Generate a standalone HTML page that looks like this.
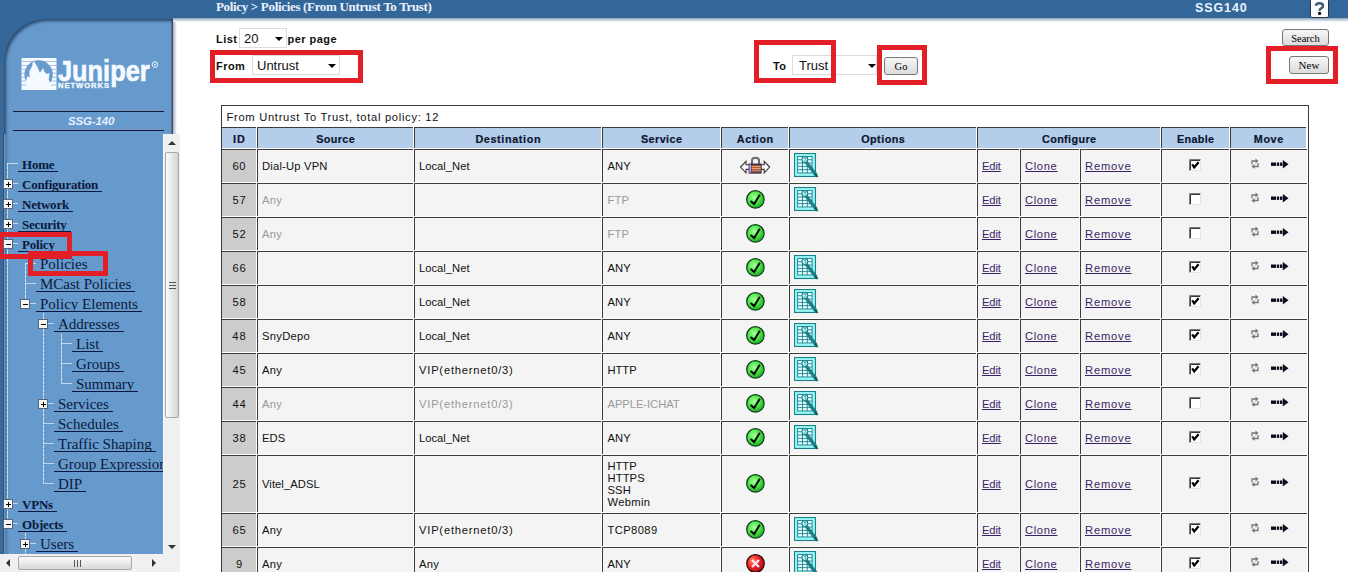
<!DOCTYPE html><html><head><meta charset="utf-8"><style>
*{box-sizing:border-box}
html,body{margin:0;padding:0;background:#fff;width:1348px;height:572px;overflow:hidden;position:relative}
body{font-family:"Liberation Sans",sans-serif;color:#000}
.a{position:absolute}
#topbar{left:0;top:0;width:1348px;height:18px;background:#336699}
#topshadow{left:172px;top:18px;width:1176px;height:4px;background:linear-gradient(#8da3ba,#fff)}
#leftdark{left:0;top:17px;width:173px;height:60px;background:#336699}
#leftstrip{left:0;top:62px;width:4px;height:492px;background:#3a6a9c}
#panel{left:4px;top:19px;width:169px;height:140px;background:#6699cc;border-top-left-radius:42px;box-shadow:inset 2px 2px 3px rgba(20,40,70,.7),inset -1px 0 0 rgba(60,75,95,.95),inset -2px 0 1px rgba(60,80,110,.5)}
#rshadow{left:173px;top:22px;width:4px;height:112px;background:linear-gradient(90deg,#a9b3bd,#fff)}
#vscroll{left:163px;top:134px;width:17px;height:420px;background:#f0f0f0;border-left:1px solid #fafafa}
#hscroll{left:0;top:554px;width:180px;height:18px;background:#f0f0f0}
.vthumb{position:absolute;left:1px;width:14px;border:1px solid #a8a8a8;border-radius:2px;background:linear-gradient(90deg,#fbfbfb,#e4e4e4 60%,#d4d4d4)}
.hthumb{position:absolute;height:14px;border:1px solid #a8a8a8;border-radius:2px;background:linear-gradient(#fbfbfb,#e6e6e6 60%,#d6d6d6)}
.grip{position:absolute;background:#555}
.title{left:216px;top:-1px;font-family:"Liberation Serif",serif;font-weight:bold;font-size:13px;color:#eaf2ff;white-space:nowrap;letter-spacing:-0.33px}
.ssg{left:1195px;top:1px;font-weight:bold;font-size:12.5px;color:#eaf2ff;letter-spacing:0.9px}
#help{left:1311px;top:0;width:18px;height:18px;background:#fff;border:1px solid #8a97a8;border-top:0;border-radius:0 0 2px 2px;font-weight:bold;font-size:15px;color:#1e2a48;text-align:center;line-height:17px;-webkit-text-stroke:0.5px #1e2a48}
.lbl{font-weight:bold;font-size:11px;color:#111;white-space:nowrap;letter-spacing:0.45px}
.sel{background:#fff;border:1px solid #dcdcdc;font-size:13px;color:#111;white-space:nowrap}
.arrow{position:absolute;width:0;height:0;border-left:4px solid transparent;border-right:4px solid transparent;border-top:4px solid #000}
.rb{position:absolute;border:5px solid #e41e26}
.btn{position:absolute;border:1px solid #777;border-radius:3px;background:linear-gradient(#f6f6f6,#dcdcdc);font-family:"Liberation Serif",serif;font-size:10.5px;color:#000;text-align:center}
/* nav */
#nav{left:0;top:134px;width:163px;height:420px;overflow:hidden;background:#6699cc}
#navdark{left:0;top:0;width:4px;height:420px;background:#3a6a9c;border-right:1px solid #2c4f75}
#navshade{left:5px;top:0;width:4px;height:420px;background:linear-gradient(90deg,#52779e,#6699cc)}
.ni{position:absolute;white-space:nowrap;font-family:"Liberation Serif",serif;color:#0b1a3c}
.ni.b{font-weight:bold;font-size:13px;letter-spacing:-0.2px}
.ni.r{font-size:15px}
.ul{position:absolute;height:1px;background:#0b1a3c}
.tb{position:absolute;width:10px;height:10px;background:#f8f8f8;border:1px solid #56677d}
.tb i{position:absolute;left:2px;top:3.5px;width:5px;height:1.8px;background:#000}
.tb i.v{left:3.6px;top:1.9px;width:1.8px;height:5px}
.vl{position:absolute;width:1px;background:repeating-linear-gradient(#d4e2f1 0 3px,#8fb3da 3px 4px)}
.hl{position:absolute;height:1px;background:#c4d6ea}
/* table */
.c{position:absolute;border-left:1px solid #3c3c3c;border-top:1px solid #3c3c3c;background:#f4f4f4;overflow:hidden;white-space:nowrap;font-size:11.2px;color:#111}
.c.h{background:#b3cdea;font-weight:bold;font-size:11px;color:#0b1630;text-align:center;-webkit-text-stroke:0.2px #0b1630}
.c.id{background:#cccccc;text-align:center}
.t{position:absolute;left:4px}
.g{color:#9a9a9a}
.lk{color:#3a1f66;text-decoration:underline}
</style></head><body>
<div id="topbar" class="a"></div><div id="topshadow" class="a"></div><div id="leftdark" class="a"></div><div id="panel" class="a"></div><div id="leftstrip" class="a"></div><div id="rshadow" class="a"></div>
<svg class="a" style="left:21px;top:58px" width="36" height="32" viewBox="0 0 36 32"><rect x="0.5" y="0" width="35" height="32" fill="#f4faff"/><g stroke="#9fbddc" stroke-width="0.9"><path d="M0.5 3.5H35.5M0.5 7.5H35.5M0.5 11.3H35.5M0.5 15.2H35.5M0.5 19.2H35.5M0.5 23H35.5M0.5 27H35.5"/></g><circle cx="17.6" cy="16.5" r="14.2" fill="#6b9bcc"/><path d="M5.2 22 L6.5 18 L8.8 19.5 L8.2 13.5 L11.2 8 L11.6 4.6 L13.2 3.4 L16.5 9 L18.8 14.8 L22.5 9.8 L22.8 13 L25.6 16 L28.6 15 L27.6 22 L30.6 26.5 L26 30.6 L17.6 32 L9.2 30.6 L4.6 26.5 Z" fill="#f4faff"/></svg>
<div class="a" style="left:57.5px;top:53.5px;font-weight:bold;font-size:29px;color:#f4faff;line-height:34px;-webkit-text-stroke:0.7px #f4faff;transform:scaleX(0.875);transform-origin:0 0;white-space:nowrap">Juniper</div>
<div class="a" style="left:58px;top:82px;font-weight:bold;font-size:7.6px;color:#f4faff;line-height:8px;letter-spacing:0.95px;-webkit-text-stroke:0.3px #f4faff;white-space:nowrap;background:#6699cc;padding-right:1px">NETWORKS</div>
<svg class="a" style="left:151px;top:61px" width="8" height="8" viewBox="0 0 8 8"><circle cx="4" cy="3.5" r="2.8" fill="none" stroke="#eef6ff" stroke-width="1"/><circle cx="4" cy="3.5" r="0.9" fill="#eef6ff"/></svg>
<div class="a" style="left:13px;top:111px;width:151px;height:1px;background:#0b1a40;box-shadow:0 -1px 1px rgba(150,150,170,.6)"></div>
<div class="a" style="left:13px;top:130px;width:151px;height:1px;background:#0b1a40;box-shadow:0 -1px 1px rgba(150,150,170,.6)"></div>
<div class="a" style="left:68px;top:114px;font-weight:bold;font-style:italic;font-size:11.5px;color:#e4f0ff;line-height:14px;letter-spacing:-0.15px;white-space:nowrap">SSG-140</div>
<div class="a title">Policy &gt; Policies (From Untrust To Trust)</div>
<div class="a ssg">SSG140</div><svg class="a" style="left:1310px;top:0" width="19" height="18" viewBox="0 0 19 18"><rect x="0.5" y="-1" width="18" height="18.5" rx="1.5" fill="#fbfdff" stroke="#26344a" stroke-width="1"/><path d="M6 5.8 Q6 3.2 9.5 3.2 Q13 3.2 13 5.9 Q13 7.6 10.8 8.6 Q9.6 9.2 9.6 10.8" fill="none" stroke="#3b5a6a" stroke-width="2.5"/><circle cx="9.6" cy="13.4" r="1.6" fill="#000"/></svg>
<div class="a lbl" style="left:216px;top:33px">List</div>
<div class="a sel" style="left:239px;top:28px;width:48px;height:20px"><span class="a" style="left:4px;top:2px">20</span><span class="arrow" style="left:35px;top:8px"></span></div>
<div class="a lbl" style="left:287.5px;top:33px">per page</div>
<div class="a lbl" style="left:216px;top:60px">From</div>
<div class="a sel" style="left:252px;top:55px;width:88px;height:20px"><span class="a" style="left:4px;top:2px">Untrust</span><span class="arrow" style="left:75px;top:8px"></span></div>
<div class="rb" style="left:210px;top:50px;width:153px;height:33px"></div>
<div class="a lbl" style="left:773px;top:60px">To</div>
<div class="a sel" style="left:792px;top:55px;width:85px;height:20px"><span class="a" style="left:6px;top:2px">Trust</span><span class="arrow" style="left:75px;top:8px"></span></div>
<div class="rb" style="left:754px;top:40px;width:82px;height:43px"></div>
<div class="btn" style="left:884px;top:57px;width:34px;height:18px;line-height:18px">Go</div>
<div class="rb" style="left:877px;top:45px;width:50px;height:40px"></div>
<div class="btn" style="left:1282px;top:29px;width:47px;height:17px;line-height:17px">Search</div>
<div class="btn" style="left:1289px;top:56px;width:40px;height:18px;line-height:17px;font-size:11px">New</div>
<div class="rb" style="left:1266px;top:46px;width:72px;height:38px"></div>

<div id="nav" class="a"><div id="navdark" class="a"></div><div id="navshade" class="a"></div>
<div class="ni b" style="left:18px;top:24px;line-height:13px;padding:0 4px;border-bottom:1px solid #0b1a3c">Home</div>
<div class="hl" style="left:7px;top:29px;width:11px"></div>
<div class="ni b" style="left:18px;top:44px;line-height:13px;padding:0 4px;border-bottom:1px solid #0b1a3c">Configuration</div>
<div class="hl" style="left:7px;top:49px;width:11px"></div>
<div class="ni b" style="left:18px;top:64px;line-height:13px;padding:0 4px;border-bottom:1px solid #0b1a3c">Network</div>
<div class="hl" style="left:7px;top:69px;width:11px"></div>
<div class="ni b" style="left:18px;top:84px;line-height:13px;padding:0 4px;border-bottom:1px solid #0b1a3c">Security</div>
<div class="hl" style="left:7px;top:89px;width:11px"></div>
<div class="ni b" style="left:18px;top:104px;line-height:13px;padding:0 4px;border-bottom:1px solid #0b1a3c">Policy</div>
<div class="hl" style="left:7px;top:109px;width:11px"></div>
<div class="ni r" style="left:36px;top:123px;line-height:14px;padding:0 4px;border-bottom:1px solid #0b1a3c">Policies</div>
<div class="hl" style="left:25px;top:129px;width:11px"></div>
<div class="ni r" style="left:36px;top:143px;line-height:14px;padding:0 4px;border-bottom:1px solid #0b1a3c">MCast Policies</div>
<div class="hl" style="left:25px;top:149px;width:11px"></div>
<div class="ni r" style="left:36px;top:163px;line-height:14px;padding:0 4px;border-bottom:1px solid #0b1a3c">Policy Elements</div>
<div class="hl" style="left:25px;top:169px;width:11px"></div>
<div class="ni r" style="left:54px;top:183px;line-height:14px;padding:0 4px;border-bottom:1px solid #0b1a3c">Addresses</div>
<div class="hl" style="left:43px;top:189px;width:11px"></div>
<div class="ni r" style="left:72px;top:203px;line-height:14px;padding:0 4px;border-bottom:1px solid #0b1a3c">List</div>
<div class="hl" style="left:61px;top:209px;width:11px"></div>
<div class="ni r" style="left:72px;top:223px;line-height:14px;padding:0 4px;border-bottom:1px solid #0b1a3c">Groups</div>
<div class="hl" style="left:61px;top:229px;width:11px"></div>
<div class="ni r" style="left:72px;top:243px;line-height:14px;padding:0 4px;border-bottom:1px solid #0b1a3c">Summary</div>
<div class="hl" style="left:61px;top:249px;width:11px"></div>
<div class="ni r" style="left:54px;top:263px;line-height:14px;padding:0 4px;border-bottom:1px solid #0b1a3c">Services</div>
<div class="hl" style="left:43px;top:269px;width:11px"></div>
<div class="ni r" style="left:54px;top:283px;line-height:14px;padding:0 4px;border-bottom:1px solid #0b1a3c">Schedules</div>
<div class="hl" style="left:43px;top:289px;width:11px"></div>
<div class="ni r" style="left:54px;top:303px;line-height:14px;padding:0 4px;border-bottom:1px solid #0b1a3c">Traffic Shaping</div>
<div class="hl" style="left:43px;top:309px;width:11px"></div>
<div class="ni r" style="left:54px;top:323px;line-height:14px;padding:0 4px;border-bottom:1px solid #0b1a3c">Group Expression</div>
<div class="hl" style="left:43px;top:329px;width:11px"></div>
<div class="ni r" style="left:54px;top:343px;line-height:14px;padding:0 4px;border-bottom:1px solid #0b1a3c">DIP</div>
<div class="hl" style="left:43px;top:349px;width:11px"></div>
<div class="ni b" style="left:18px;top:364px;line-height:13px;padding:0 4px;border-bottom:1px solid #0b1a3c">VPNs</div>
<div class="hl" style="left:7px;top:369px;width:11px"></div>
<div class="ni b" style="left:18px;top:384px;line-height:13px;padding:0 4px;border-bottom:1px solid #0b1a3c">Objects</div>
<div class="hl" style="left:7px;top:389px;width:11px"></div>
<div class="ni r" style="left:36px;top:403px;line-height:14px;padding:0 4px;border-bottom:1px solid #0b1a3c">Users</div>
<div class="hl" style="left:25px;top:409px;width:11px"></div>
<div class="vl" style="left:7px;top:29px;height:360px"></div>
<div class="vl" style="left:25px;top:129px;height:40px"></div>
<div class="vl" style="left:43px;top:179px;height:170px"></div>
<div class="vl" style="left:61px;top:200px;height:49px"></div>
<div class="vl" style="left:25px;top:399px;height:30px"></div>
<div class="tb" style="left:3px;top:45px"><i></i><i class="v"></i></div><div class="tb" style="left:3px;top:65px"><i></i><i class="v"></i></div><div class="tb" style="left:3px;top:85px"><i></i><i class="v"></i></div><div class="tb" style="left:3px;top:105px"><i></i></div><div class="tb" style="left:20px;top:165px"><i></i></div><div class="tb" style="left:38px;top:185px"><i></i></div><div class="tb" style="left:38px;top:265px"><i></i><i class="v"></i></div><div class="tb" style="left:3px;top:365px"><i></i><i class="v"></i></div><div class="tb" style="left:3px;top:385px"><i></i></div><div class="tb" style="left:20px;top:405px"><i></i><i class="v"></i></div>
</div>
<div id="vscroll" class="a"><div class="arrow" style="left:4px;top:7px;border-top:0;border-bottom:4px solid #333"></div><div class="vthumb" style="top:18px;height:266px"><div class="grip" style="left:3px;top:129px;width:7px;height:1px"></div><div class="grip" style="left:3px;top:132px;width:7px;height:1px"></div><div class="grip" style="left:3px;top:135px;width:7px;height:1px"></div></div><div class="arrow" style="left:4px;top:411px;border-top:4px solid #333"></div></div>
<div id="hscroll" class="a"><div class="arrow" style="left:6px;top:5px;border-left:0;border-right:4px solid #333;border-top:4px solid transparent;border-bottom:4px solid transparent"></div><div class="hthumb" style="left:18px;top:2px;width:114px"><div class="grip" style="left:55px;top:3px;width:1px;height:7px"></div><div class="grip" style="left:58px;top:3px;width:1px;height:7px"></div><div class="grip" style="left:61px;top:3px;width:1px;height:7px"></div></div><div class="arrow" style="left:152px;top:5px;border-right:0;border-left:4px solid #333;border-top:4px solid transparent;border-bottom:4px solid transparent"></div></div>
<div class="rb" style="left:-2px;top:232px;width:74px;height:27px"></div>
<div class="rb" style="left:28px;top:251px;width:80px;height:25px"></div>
<div class="a" style="left:221px;top:105px;width:1088px;height:480px;border-top:1px solid #3c3c3c;border-left:1px solid #3c3c3c;border-right:1px solid #3c3c3c"></div>
<div class="a" style="left:226.5px;top:109.62px;font-size:11.2px;color:#111;white-space:nowrap;letter-spacing:0.69px;line-height:14px">From Untrust To Trust, total policy: 12</div>
<div class="c h" style="left:221px;top:127px;width:35px;height:21px;"><div class="a" style="left:0;width:34px;top:3.86px;line-height:14px;letter-spacing:1.00px;text-indent:1.00px;font-size:10.8px">ID</div></div>
<div class="c h" style="left:257px;top:127px;width:156px;height:21px;"><div class="a" style="left:0;width:155px;top:3.86px;line-height:14px;letter-spacing:0.38px;text-indent:0.38px;font-size:10.8px">Source</div></div>
<div class="c h" style="left:414px;top:127px;width:187px;height:21px;"><div class="a" style="left:0;width:186px;top:3.86px;line-height:14px;letter-spacing:0.64px;text-indent:0.64px;font-size:10.8px">Destination</div></div>
<div class="c h" style="left:602px;top:127px;width:118px;height:21px;"><div class="a" style="left:0;width:117px;top:3.86px;line-height:14px;letter-spacing:0.43px;text-indent:0.43px;font-size:10.8px">Service</div></div>
<div class="c h" style="left:721px;top:127px;width:67px;height:21px;"><div class="a" style="left:0;width:66px;top:3.86px;line-height:14px;letter-spacing:0.56px;text-indent:0.56px;font-size:10.8px">Action</div></div>
<div class="c h" style="left:789px;top:127px;width:187px;height:21px;"><div class="a" style="left:0;width:186px;top:3.86px;line-height:14px;letter-spacing:0.49px;text-indent:0.49px;font-size:10.8px">Options</div></div>
<div class="c h" style="left:977px;top:127px;width:183px;height:21px;"><div class="a" style="left:0;width:182px;top:3.86px;line-height:14px;letter-spacing:0.37px;text-indent:0.37px;font-size:10.8px">Configure</div></div>
<div class="c h" style="left:1161px;top:127px;width:68px;height:21px;"><div class="a" style="left:0;width:67px;top:3.86px;line-height:14px;letter-spacing:0.36px;text-indent:0.36px;font-size:10.8px">Enable</div></div>
<div class="c h" style="left:1230px;top:127px;width:76px;height:21px;"><div class="a" style="left:0;width:75px;top:3.86px;line-height:14px;letter-spacing:0.57px;text-indent:0.57px;font-size:10.8px">Move</div></div>
<div class="c id" style="left:221px;top:149px;width:35px;height:33px;"><div class="a" style="left:0;width:34px;text-align:center;top:9.12px;line-height:14px;letter-spacing:0.68px;text-indent:0.68px">60</div></div>
<div class="c " style="left:257px;top:149px;width:156px;height:33px;"><div class="a" style="left:4px;top:9.12px;line-height:14px;letter-spacing:0.20px">Dial-Up VPN</div></div>
<div class="c " style="left:414px;top:149px;width:187px;height:33px;"><div class="a" style="left:4px;top:9.12px;line-height:14px;letter-spacing:0.02px">Local_Net</div></div>
<div class="c " style="left:602px;top:149px;width:118px;height:33px;"><div class="a" style="left:4.5px;top:9.12px;line-height:14px;letter-spacing:0.11px">ANY</div></div>
<div class="c " style="left:721px;top:149px;width:67px;height:33px;"><div class="a" style="left:18px;top:6px;line-height:0"><svg width="31" height="19" viewBox="0 0 31 19"><path d="M0.6 11 L6 5.3 L6 8.8 L9.5 8.8 L9.5 13.4 L6 13.4 L6 16.9 Z" fill="#fdfdfd" stroke="#3a3a3a" stroke-width="1.1"/><path d="M29.6 11 L24.2 5.3 L24.2 8.8 L20.7 8.8 L20.7 13.4 L24.2 13.4 L24.2 16.9 Z" fill="#fdfdfd" stroke="#3a3a3a" stroke-width="1.1"/><path d="M12 8 V4.6 Q12 1.8 15.5 1.8 Q19 1.8 19 4.6 V8" fill="none" stroke="#6d6878" stroke-width="2.1"/><rect x="8.6" y="7.6" width="13" height="10" fill="#2c2050"/><rect x="9.4" y="8.4" width="1.6" height="8.4" fill="#c0a8f0"/><g stroke-width="1.05"><path d="M11.5 9.3 H20.8 M11.5 11.5 H20.8 M11.5 13.7 H20.8 M11.5 15.9 H20.8" stroke="#b35a2a"/><path d="M11.5 10.4 H20.8 M11.5 12.6 H20.8 M11.5 14.8 H20.8" stroke="#f0a070"/></g></svg></div></div>
<div class="c " style="left:789px;top:149px;width:187px;height:33px;"><div class="a" style="left:4px;top:3.3px;line-height:0"><svg width="25" height="25" viewBox="0 0 25 25"><rect x="0.5" y="0.5" width="21" height="23" fill="#96f4f4" stroke="#1b8088" stroke-width="1.1"/><rect x="3.2" y="3" width="15.3" height="17.4" fill="#1b8088"/><g fill="#e6ffff"><rect x="4.1" y="3.9" width="3.9" height="2.4"/><rect x="4.1" y="7.2" width="3.9" height="2.4"/><rect x="4.1" y="10.5" width="3.9" height="2.4"/><rect x="4.1" y="13.8" width="3.9" height="2.4"/><rect x="4.1" y="17.1" width="3.9" height="2.4"/><rect x="8.9" y="3.9" width="3.9" height="2.4"/><rect x="8.9" y="7.2" width="3.9" height="2.4"/><rect x="8.9" y="10.5" width="3.9" height="2.4"/><rect x="8.9" y="13.8" width="3.9" height="2.4"/><rect x="8.9" y="17.1" width="3.9" height="2.4"/><rect x="13.7" y="3.9" width="3.9" height="2.4"/><rect x="13.7" y="7.2" width="3.9" height="2.4"/><rect x="13.7" y="10.5" width="3.9" height="2.4"/><rect x="13.7" y="13.8" width="3.9" height="2.4"/><rect x="13.7" y="17.1" width="3.9" height="2.4"/></g><circle cx="10.8" cy="6.6" r="2.9" fill="#c8ffff" stroke="#1b8088" stroke-width="1.1"/><path d="M10 5.6 Q11.8 4.6 11.6 6.3 Q10 7 11.5 8" fill="none" stroke="#1b8088" stroke-width="0.8"/><path d="M12.3 9.2 L22.3 22.3" stroke="#1b8088" stroke-width="3.4"/><path d="M21 20.6 L23.6 24" stroke="#0f5c62" stroke-width="2"/></svg></div></div>
<div class="c " style="left:977px;top:149px;width:42px;height:33px;"><div class="a lk" style="left:4px;top:9.12px;line-height:14px;letter-spacing:-0.12px">Edit</div></div>
<div class="c " style="left:1020px;top:149px;width:59px;height:33px;"><div class="a lk" style="left:4px;top:9.12px;line-height:14px;letter-spacing:0.65px">Clone</div></div>
<div class="c " style="left:1080px;top:149px;width:80px;height:33px;"><div class="a lk" style="left:4px;top:9.12px;line-height:14px;letter-spacing:0.81px">Remove</div></div>
<div class="c " style="left:1161px;top:149px;width:68px;height:33px;"><div class="a" style="left:27px;top:9px;line-height:0"><svg width="12" height="12" viewBox="0 0 12 12"><rect x="0" y="0" width="12" height="12" fill="#fff"/><path d="M0.5 12 V0.5 H12" fill="none" stroke="#7a7a7a" stroke-width="1"/><path d="M1.5 11 V1.5 H11" fill="none" stroke="#383838" stroke-width="1"/><path d="M0.5 11.5 H11.5 V0.5" fill="none" stroke="#e4e4e4" stroke-width="1"/><path d="M3.2 5.4 L5.2 8.4 L9.6 3.2" fill="none" stroke="#000" stroke-width="2.2"/></svg></div></div>
<div class="c " style="left:1230px;top:149px;width:77px;height:33px;"><div class="a" style="left:19.5px;top:8px;line-height:0"><svg width="8" height="12" viewBox="0 0 8 12"><path d="M1 6.5 V3 H5" fill="none" stroke="#777" stroke-width="1.3"/><path d="M4.5 0.5 L7.5 3 L4.5 5.5 Z" fill="#777"/><path d="M7 5 V8.5 H3" fill="none" stroke="#777" stroke-width="1.3"/><path d="M3.5 6 L0.5 8.5 L3.5 11 Z" fill="#777"/></svg></div><div class="a" style="left:39.6px;top:10px;line-height:0"><svg width="18" height="9" viewBox="0 0 18 9"><g fill="#0a0f1e"><rect x="0" y="2.5" width="5" height="3.4"/><rect x="5.8" y="2.5" width="2.4" height="3.4"/><rect x="9" y="2.5" width="2.4" height="3.4"/><path d="M11.8 0 L17.5 4.2 L11.8 8.4 Z"/></g></svg></div></div>
<div class="c id" style="left:221px;top:183px;width:35px;height:33px;"><div class="a" style="left:0;width:34px;text-align:center;top:9.12px;line-height:14px;letter-spacing:0.78px;text-indent:0.78px">57</div></div>
<div class="c " style="left:257px;top:183px;width:156px;height:33px;"><div class="a g" style="left:4px;top:9.12px;line-height:14px;letter-spacing:0.34px">Any</div></div>
<div class="c " style="left:414px;top:183px;width:187px;height:33px;"></div>
<div class="c " style="left:602px;top:183px;width:118px;height:33px;"><div class="a g" style="left:4.5px;top:9.12px;line-height:14px;letter-spacing:0.11px">FTP</div></div>
<div class="c " style="left:721px;top:183px;width:67px;height:33px;"><div class="a" style="left:24px;top:6px;line-height:0"><svg width="19" height="19" viewBox="0 0 19 19"><defs><radialGradient id="gg" cx="42%" cy="38%" r="62%"><stop offset="0" stop-color="#a6ff9a"/><stop offset=".55" stop-color="#4ee44a"/><stop offset="1" stop-color="#1fae26"/></radialGradient></defs><circle cx="9.4" cy="9.4" r="8.7" fill="url(#gg)" stroke="#063a10" stroke-width="1.2"/><path d="M4.6 11 L8.2 14 L13.8 4.8" fill="none" stroke="#000" stroke-width="1.9"/></svg></div></div>
<div class="c " style="left:789px;top:183px;width:187px;height:33px;"><div class="a" style="left:4px;top:3.3px;line-height:0"><svg width="25" height="25" viewBox="0 0 25 25"><rect x="0.5" y="0.5" width="21" height="23" fill="#96f4f4" stroke="#1b8088" stroke-width="1.1"/><rect x="3.2" y="3" width="15.3" height="17.4" fill="#1b8088"/><g fill="#e6ffff"><rect x="4.1" y="3.9" width="3.9" height="2.4"/><rect x="4.1" y="7.2" width="3.9" height="2.4"/><rect x="4.1" y="10.5" width="3.9" height="2.4"/><rect x="4.1" y="13.8" width="3.9" height="2.4"/><rect x="4.1" y="17.1" width="3.9" height="2.4"/><rect x="8.9" y="3.9" width="3.9" height="2.4"/><rect x="8.9" y="7.2" width="3.9" height="2.4"/><rect x="8.9" y="10.5" width="3.9" height="2.4"/><rect x="8.9" y="13.8" width="3.9" height="2.4"/><rect x="8.9" y="17.1" width="3.9" height="2.4"/><rect x="13.7" y="3.9" width="3.9" height="2.4"/><rect x="13.7" y="7.2" width="3.9" height="2.4"/><rect x="13.7" y="10.5" width="3.9" height="2.4"/><rect x="13.7" y="13.8" width="3.9" height="2.4"/><rect x="13.7" y="17.1" width="3.9" height="2.4"/></g><circle cx="10.8" cy="6.6" r="2.9" fill="#c8ffff" stroke="#1b8088" stroke-width="1.1"/><path d="M10 5.6 Q11.8 4.6 11.6 6.3 Q10 7 11.5 8" fill="none" stroke="#1b8088" stroke-width="0.8"/><path d="M12.3 9.2 L22.3 22.3" stroke="#1b8088" stroke-width="3.4"/><path d="M21 20.6 L23.6 24" stroke="#0f5c62" stroke-width="2"/></svg></div></div>
<div class="c " style="left:977px;top:183px;width:42px;height:33px;"><div class="a lk" style="left:4px;top:9.12px;line-height:14px;letter-spacing:-0.12px">Edit</div></div>
<div class="c " style="left:1020px;top:183px;width:59px;height:33px;"><div class="a lk" style="left:4px;top:9.12px;line-height:14px;letter-spacing:0.65px">Clone</div></div>
<div class="c " style="left:1080px;top:183px;width:80px;height:33px;"><div class="a lk" style="left:4px;top:9.12px;line-height:14px;letter-spacing:0.81px">Remove</div></div>
<div class="c " style="left:1161px;top:183px;width:68px;height:33px;"><div class="a" style="left:27px;top:9px;line-height:0"><svg width="12" height="12" viewBox="0 0 12 12"><rect x="0" y="0" width="12" height="12" fill="#fff"/><path d="M0.5 12 V0.5 H12" fill="none" stroke="#7a7a7a" stroke-width="1"/><path d="M1.5 11 V1.5 H11" fill="none" stroke="#383838" stroke-width="1"/><path d="M0.5 11.5 H11.5 V0.5" fill="none" stroke="#e4e4e4" stroke-width="1"/></svg></div></div>
<div class="c " style="left:1230px;top:183px;width:77px;height:33px;"><div class="a" style="left:19.5px;top:8px;line-height:0"><svg width="8" height="12" viewBox="0 0 8 12"><path d="M1 6.5 V3 H5" fill="none" stroke="#777" stroke-width="1.3"/><path d="M4.5 0.5 L7.5 3 L4.5 5.5 Z" fill="#777"/><path d="M7 5 V8.5 H3" fill="none" stroke="#777" stroke-width="1.3"/><path d="M3.5 6 L0.5 8.5 L3.5 11 Z" fill="#777"/></svg></div><div class="a" style="left:39.6px;top:10px;line-height:0"><svg width="18" height="9" viewBox="0 0 18 9"><g fill="#0a0f1e"><rect x="0" y="2.5" width="5" height="3.4"/><rect x="5.8" y="2.5" width="2.4" height="3.4"/><rect x="9" y="2.5" width="2.4" height="3.4"/><path d="M11.8 0 L17.5 4.2 L11.8 8.4 Z"/></g></svg></div></div>
<div class="c id" style="left:221px;top:217px;width:35px;height:33px;"><div class="a" style="left:0;width:34px;text-align:center;top:9.12px;line-height:14px;letter-spacing:0.78px;text-indent:0.78px">52</div></div>
<div class="c " style="left:257px;top:217px;width:156px;height:33px;"><div class="a g" style="left:4px;top:9.12px;line-height:14px;letter-spacing:0.34px">Any</div></div>
<div class="c " style="left:414px;top:217px;width:187px;height:33px;"></div>
<div class="c " style="left:602px;top:217px;width:118px;height:33px;"><div class="a g" style="left:4.5px;top:9.12px;line-height:14px;letter-spacing:0.11px">FTP</div></div>
<div class="c " style="left:721px;top:217px;width:67px;height:33px;"><div class="a" style="left:24px;top:6px;line-height:0"><svg width="19" height="19" viewBox="0 0 19 19"><defs><radialGradient id="gg" cx="42%" cy="38%" r="62%"><stop offset="0" stop-color="#a6ff9a"/><stop offset=".55" stop-color="#4ee44a"/><stop offset="1" stop-color="#1fae26"/></radialGradient></defs><circle cx="9.4" cy="9.4" r="8.7" fill="url(#gg)" stroke="#063a10" stroke-width="1.2"/><path d="M4.6 11 L8.2 14 L13.8 4.8" fill="none" stroke="#000" stroke-width="1.9"/></svg></div></div>
<div class="c " style="left:789px;top:217px;width:187px;height:33px;"></div>
<div class="c " style="left:977px;top:217px;width:42px;height:33px;"><div class="a lk" style="left:4px;top:9.12px;line-height:14px;letter-spacing:-0.12px">Edit</div></div>
<div class="c " style="left:1020px;top:217px;width:59px;height:33px;"><div class="a lk" style="left:4px;top:9.12px;line-height:14px;letter-spacing:0.65px">Clone</div></div>
<div class="c " style="left:1080px;top:217px;width:80px;height:33px;"><div class="a lk" style="left:4px;top:9.12px;line-height:14px;letter-spacing:0.81px">Remove</div></div>
<div class="c " style="left:1161px;top:217px;width:68px;height:33px;"><div class="a" style="left:27px;top:9px;line-height:0"><svg width="12" height="12" viewBox="0 0 12 12"><rect x="0" y="0" width="12" height="12" fill="#fff"/><path d="M0.5 12 V0.5 H12" fill="none" stroke="#7a7a7a" stroke-width="1"/><path d="M1.5 11 V1.5 H11" fill="none" stroke="#383838" stroke-width="1"/><path d="M0.5 11.5 H11.5 V0.5" fill="none" stroke="#e4e4e4" stroke-width="1"/></svg></div></div>
<div class="c " style="left:1230px;top:217px;width:77px;height:33px;"><div class="a" style="left:19.5px;top:8px;line-height:0"><svg width="8" height="12" viewBox="0 0 8 12"><path d="M1 6.5 V3 H5" fill="none" stroke="#777" stroke-width="1.3"/><path d="M4.5 0.5 L7.5 3 L4.5 5.5 Z" fill="#777"/><path d="M7 5 V8.5 H3" fill="none" stroke="#777" stroke-width="1.3"/><path d="M3.5 6 L0.5 8.5 L3.5 11 Z" fill="#777"/></svg></div><div class="a" style="left:39.6px;top:10px;line-height:0"><svg width="18" height="9" viewBox="0 0 18 9"><g fill="#0a0f1e"><rect x="0" y="2.5" width="5" height="3.4"/><rect x="5.8" y="2.5" width="2.4" height="3.4"/><rect x="9" y="2.5" width="2.4" height="3.4"/><path d="M11.8 0 L17.5 4.2 L11.8 8.4 Z"/></g></svg></div></div>
<div class="c id" style="left:221px;top:251px;width:35px;height:33px;"><div class="a" style="left:0;width:34px;text-align:center;top:9.12px;line-height:14px;letter-spacing:0.78px;text-indent:0.78px">66</div></div>
<div class="c " style="left:257px;top:251px;width:156px;height:33px;"></div>
<div class="c " style="left:414px;top:251px;width:187px;height:33px;"><div class="a" style="left:4px;top:9.12px;line-height:14px;letter-spacing:0.02px">Local_Net</div></div>
<div class="c " style="left:602px;top:251px;width:118px;height:33px;"><div class="a" style="left:4.5px;top:9.12px;line-height:14px;letter-spacing:0.11px">ANY</div></div>
<div class="c " style="left:721px;top:251px;width:67px;height:33px;"><div class="a" style="left:24px;top:6px;line-height:0"><svg width="19" height="19" viewBox="0 0 19 19"><defs><radialGradient id="gg" cx="42%" cy="38%" r="62%"><stop offset="0" stop-color="#a6ff9a"/><stop offset=".55" stop-color="#4ee44a"/><stop offset="1" stop-color="#1fae26"/></radialGradient></defs><circle cx="9.4" cy="9.4" r="8.7" fill="url(#gg)" stroke="#063a10" stroke-width="1.2"/><path d="M4.6 11 L8.2 14 L13.8 4.8" fill="none" stroke="#000" stroke-width="1.9"/></svg></div></div>
<div class="c " style="left:789px;top:251px;width:187px;height:33px;"><div class="a" style="left:4px;top:3.3px;line-height:0"><svg width="25" height="25" viewBox="0 0 25 25"><rect x="0.5" y="0.5" width="21" height="23" fill="#96f4f4" stroke="#1b8088" stroke-width="1.1"/><rect x="3.2" y="3" width="15.3" height="17.4" fill="#1b8088"/><g fill="#e6ffff"><rect x="4.1" y="3.9" width="3.9" height="2.4"/><rect x="4.1" y="7.2" width="3.9" height="2.4"/><rect x="4.1" y="10.5" width="3.9" height="2.4"/><rect x="4.1" y="13.8" width="3.9" height="2.4"/><rect x="4.1" y="17.1" width="3.9" height="2.4"/><rect x="8.9" y="3.9" width="3.9" height="2.4"/><rect x="8.9" y="7.2" width="3.9" height="2.4"/><rect x="8.9" y="10.5" width="3.9" height="2.4"/><rect x="8.9" y="13.8" width="3.9" height="2.4"/><rect x="8.9" y="17.1" width="3.9" height="2.4"/><rect x="13.7" y="3.9" width="3.9" height="2.4"/><rect x="13.7" y="7.2" width="3.9" height="2.4"/><rect x="13.7" y="10.5" width="3.9" height="2.4"/><rect x="13.7" y="13.8" width="3.9" height="2.4"/><rect x="13.7" y="17.1" width="3.9" height="2.4"/></g><circle cx="10.8" cy="6.6" r="2.9" fill="#c8ffff" stroke="#1b8088" stroke-width="1.1"/><path d="M10 5.6 Q11.8 4.6 11.6 6.3 Q10 7 11.5 8" fill="none" stroke="#1b8088" stroke-width="0.8"/><path d="M12.3 9.2 L22.3 22.3" stroke="#1b8088" stroke-width="3.4"/><path d="M21 20.6 L23.6 24" stroke="#0f5c62" stroke-width="2"/></svg></div></div>
<div class="c " style="left:977px;top:251px;width:42px;height:33px;"><div class="a lk" style="left:4px;top:9.12px;line-height:14px;letter-spacing:-0.12px">Edit</div></div>
<div class="c " style="left:1020px;top:251px;width:59px;height:33px;"><div class="a lk" style="left:4px;top:9.12px;line-height:14px;letter-spacing:0.65px">Clone</div></div>
<div class="c " style="left:1080px;top:251px;width:80px;height:33px;"><div class="a lk" style="left:4px;top:9.12px;line-height:14px;letter-spacing:0.81px">Remove</div></div>
<div class="c " style="left:1161px;top:251px;width:68px;height:33px;"><div class="a" style="left:27px;top:9px;line-height:0"><svg width="12" height="12" viewBox="0 0 12 12"><rect x="0" y="0" width="12" height="12" fill="#fff"/><path d="M0.5 12 V0.5 H12" fill="none" stroke="#7a7a7a" stroke-width="1"/><path d="M1.5 11 V1.5 H11" fill="none" stroke="#383838" stroke-width="1"/><path d="M0.5 11.5 H11.5 V0.5" fill="none" stroke="#e4e4e4" stroke-width="1"/><path d="M3.2 5.4 L5.2 8.4 L9.6 3.2" fill="none" stroke="#000" stroke-width="2.2"/></svg></div></div>
<div class="c " style="left:1230px;top:251px;width:77px;height:33px;"><div class="a" style="left:19.5px;top:8px;line-height:0"><svg width="8" height="12" viewBox="0 0 8 12"><path d="M1 6.5 V3 H5" fill="none" stroke="#777" stroke-width="1.3"/><path d="M4.5 0.5 L7.5 3 L4.5 5.5 Z" fill="#777"/><path d="M7 5 V8.5 H3" fill="none" stroke="#777" stroke-width="1.3"/><path d="M3.5 6 L0.5 8.5 L3.5 11 Z" fill="#777"/></svg></div><div class="a" style="left:39.6px;top:10px;line-height:0"><svg width="18" height="9" viewBox="0 0 18 9"><g fill="#0a0f1e"><rect x="0" y="2.5" width="5" height="3.4"/><rect x="5.8" y="2.5" width="2.4" height="3.4"/><rect x="9" y="2.5" width="2.4" height="3.4"/><path d="M11.8 0 L17.5 4.2 L11.8 8.4 Z"/></g></svg></div></div>
<div class="c id" style="left:221px;top:285px;width:35px;height:33px;"><div class="a" style="left:0;width:34px;text-align:center;top:9.12px;line-height:14px;letter-spacing:0.78px;text-indent:0.78px">58</div></div>
<div class="c " style="left:257px;top:285px;width:156px;height:33px;"></div>
<div class="c " style="left:414px;top:285px;width:187px;height:33px;"><div class="a" style="left:4px;top:9.12px;line-height:14px;letter-spacing:0.02px">Local_Net</div></div>
<div class="c " style="left:602px;top:285px;width:118px;height:33px;"><div class="a" style="left:4.5px;top:9.12px;line-height:14px;letter-spacing:0.11px">ANY</div></div>
<div class="c " style="left:721px;top:285px;width:67px;height:33px;"><div class="a" style="left:24px;top:6px;line-height:0"><svg width="19" height="19" viewBox="0 0 19 19"><defs><radialGradient id="gg" cx="42%" cy="38%" r="62%"><stop offset="0" stop-color="#a6ff9a"/><stop offset=".55" stop-color="#4ee44a"/><stop offset="1" stop-color="#1fae26"/></radialGradient></defs><circle cx="9.4" cy="9.4" r="8.7" fill="url(#gg)" stroke="#063a10" stroke-width="1.2"/><path d="M4.6 11 L8.2 14 L13.8 4.8" fill="none" stroke="#000" stroke-width="1.9"/></svg></div></div>
<div class="c " style="left:789px;top:285px;width:187px;height:33px;"><div class="a" style="left:4px;top:3.3px;line-height:0"><svg width="25" height="25" viewBox="0 0 25 25"><rect x="0.5" y="0.5" width="21" height="23" fill="#96f4f4" stroke="#1b8088" stroke-width="1.1"/><rect x="3.2" y="3" width="15.3" height="17.4" fill="#1b8088"/><g fill="#e6ffff"><rect x="4.1" y="3.9" width="3.9" height="2.4"/><rect x="4.1" y="7.2" width="3.9" height="2.4"/><rect x="4.1" y="10.5" width="3.9" height="2.4"/><rect x="4.1" y="13.8" width="3.9" height="2.4"/><rect x="4.1" y="17.1" width="3.9" height="2.4"/><rect x="8.9" y="3.9" width="3.9" height="2.4"/><rect x="8.9" y="7.2" width="3.9" height="2.4"/><rect x="8.9" y="10.5" width="3.9" height="2.4"/><rect x="8.9" y="13.8" width="3.9" height="2.4"/><rect x="8.9" y="17.1" width="3.9" height="2.4"/><rect x="13.7" y="3.9" width="3.9" height="2.4"/><rect x="13.7" y="7.2" width="3.9" height="2.4"/><rect x="13.7" y="10.5" width="3.9" height="2.4"/><rect x="13.7" y="13.8" width="3.9" height="2.4"/><rect x="13.7" y="17.1" width="3.9" height="2.4"/></g><circle cx="10.8" cy="6.6" r="2.9" fill="#c8ffff" stroke="#1b8088" stroke-width="1.1"/><path d="M10 5.6 Q11.8 4.6 11.6 6.3 Q10 7 11.5 8" fill="none" stroke="#1b8088" stroke-width="0.8"/><path d="M12.3 9.2 L22.3 22.3" stroke="#1b8088" stroke-width="3.4"/><path d="M21 20.6 L23.6 24" stroke="#0f5c62" stroke-width="2"/></svg></div></div>
<div class="c " style="left:977px;top:285px;width:42px;height:33px;"><div class="a lk" style="left:4px;top:9.12px;line-height:14px;letter-spacing:-0.12px">Edit</div></div>
<div class="c " style="left:1020px;top:285px;width:59px;height:33px;"><div class="a lk" style="left:4px;top:9.12px;line-height:14px;letter-spacing:0.65px">Clone</div></div>
<div class="c " style="left:1080px;top:285px;width:80px;height:33px;"><div class="a lk" style="left:4px;top:9.12px;line-height:14px;letter-spacing:0.81px">Remove</div></div>
<div class="c " style="left:1161px;top:285px;width:68px;height:33px;"><div class="a" style="left:27px;top:9px;line-height:0"><svg width="12" height="12" viewBox="0 0 12 12"><rect x="0" y="0" width="12" height="12" fill="#fff"/><path d="M0.5 12 V0.5 H12" fill="none" stroke="#7a7a7a" stroke-width="1"/><path d="M1.5 11 V1.5 H11" fill="none" stroke="#383838" stroke-width="1"/><path d="M0.5 11.5 H11.5 V0.5" fill="none" stroke="#e4e4e4" stroke-width="1"/><path d="M3.2 5.4 L5.2 8.4 L9.6 3.2" fill="none" stroke="#000" stroke-width="2.2"/></svg></div></div>
<div class="c " style="left:1230px;top:285px;width:77px;height:33px;"><div class="a" style="left:19.5px;top:8px;line-height:0"><svg width="8" height="12" viewBox="0 0 8 12"><path d="M1 6.5 V3 H5" fill="none" stroke="#777" stroke-width="1.3"/><path d="M4.5 0.5 L7.5 3 L4.5 5.5 Z" fill="#777"/><path d="M7 5 V8.5 H3" fill="none" stroke="#777" stroke-width="1.3"/><path d="M3.5 6 L0.5 8.5 L3.5 11 Z" fill="#777"/></svg></div><div class="a" style="left:39.6px;top:10px;line-height:0"><svg width="18" height="9" viewBox="0 0 18 9"><g fill="#0a0f1e"><rect x="0" y="2.5" width="5" height="3.4"/><rect x="5.8" y="2.5" width="2.4" height="3.4"/><rect x="9" y="2.5" width="2.4" height="3.4"/><path d="M11.8 0 L17.5 4.2 L11.8 8.4 Z"/></g></svg></div></div>
<div class="c id" style="left:221px;top:319px;width:35px;height:33px;"><div class="a" style="left:0;width:34px;text-align:center;top:9.12px;line-height:14px;letter-spacing:0.88px;text-indent:0.88px">48</div></div>
<div class="c " style="left:257px;top:319px;width:156px;height:33px;"><div class="a" style="left:4px;top:9.12px;line-height:14px;letter-spacing:0.30px">SnyDepo</div></div>
<div class="c " style="left:414px;top:319px;width:187px;height:33px;"><div class="a" style="left:4px;top:9.12px;line-height:14px;letter-spacing:0.02px">Local_Net</div></div>
<div class="c " style="left:602px;top:319px;width:118px;height:33px;"><div class="a" style="left:4.5px;top:9.12px;line-height:14px;letter-spacing:0.11px">ANY</div></div>
<div class="c " style="left:721px;top:319px;width:67px;height:33px;"><div class="a" style="left:24px;top:6px;line-height:0"><svg width="19" height="19" viewBox="0 0 19 19"><defs><radialGradient id="gg" cx="42%" cy="38%" r="62%"><stop offset="0" stop-color="#a6ff9a"/><stop offset=".55" stop-color="#4ee44a"/><stop offset="1" stop-color="#1fae26"/></radialGradient></defs><circle cx="9.4" cy="9.4" r="8.7" fill="url(#gg)" stroke="#063a10" stroke-width="1.2"/><path d="M4.6 11 L8.2 14 L13.8 4.8" fill="none" stroke="#000" stroke-width="1.9"/></svg></div></div>
<div class="c " style="left:789px;top:319px;width:187px;height:33px;"><div class="a" style="left:4px;top:3.3px;line-height:0"><svg width="25" height="25" viewBox="0 0 25 25"><rect x="0.5" y="0.5" width="21" height="23" fill="#96f4f4" stroke="#1b8088" stroke-width="1.1"/><rect x="3.2" y="3" width="15.3" height="17.4" fill="#1b8088"/><g fill="#e6ffff"><rect x="4.1" y="3.9" width="3.9" height="2.4"/><rect x="4.1" y="7.2" width="3.9" height="2.4"/><rect x="4.1" y="10.5" width="3.9" height="2.4"/><rect x="4.1" y="13.8" width="3.9" height="2.4"/><rect x="4.1" y="17.1" width="3.9" height="2.4"/><rect x="8.9" y="3.9" width="3.9" height="2.4"/><rect x="8.9" y="7.2" width="3.9" height="2.4"/><rect x="8.9" y="10.5" width="3.9" height="2.4"/><rect x="8.9" y="13.8" width="3.9" height="2.4"/><rect x="8.9" y="17.1" width="3.9" height="2.4"/><rect x="13.7" y="3.9" width="3.9" height="2.4"/><rect x="13.7" y="7.2" width="3.9" height="2.4"/><rect x="13.7" y="10.5" width="3.9" height="2.4"/><rect x="13.7" y="13.8" width="3.9" height="2.4"/><rect x="13.7" y="17.1" width="3.9" height="2.4"/></g><circle cx="10.8" cy="6.6" r="2.9" fill="#c8ffff" stroke="#1b8088" stroke-width="1.1"/><path d="M10 5.6 Q11.8 4.6 11.6 6.3 Q10 7 11.5 8" fill="none" stroke="#1b8088" stroke-width="0.8"/><path d="M12.3 9.2 L22.3 22.3" stroke="#1b8088" stroke-width="3.4"/><path d="M21 20.6 L23.6 24" stroke="#0f5c62" stroke-width="2"/></svg></div></div>
<div class="c " style="left:977px;top:319px;width:42px;height:33px;"><div class="a lk" style="left:4px;top:9.12px;line-height:14px;letter-spacing:-0.12px">Edit</div></div>
<div class="c " style="left:1020px;top:319px;width:59px;height:33px;"><div class="a lk" style="left:4px;top:9.12px;line-height:14px;letter-spacing:0.65px">Clone</div></div>
<div class="c " style="left:1080px;top:319px;width:80px;height:33px;"><div class="a lk" style="left:4px;top:9.12px;line-height:14px;letter-spacing:0.81px">Remove</div></div>
<div class="c " style="left:1161px;top:319px;width:68px;height:33px;"><div class="a" style="left:27px;top:9px;line-height:0"><svg width="12" height="12" viewBox="0 0 12 12"><rect x="0" y="0" width="12" height="12" fill="#fff"/><path d="M0.5 12 V0.5 H12" fill="none" stroke="#7a7a7a" stroke-width="1"/><path d="M1.5 11 V1.5 H11" fill="none" stroke="#383838" stroke-width="1"/><path d="M0.5 11.5 H11.5 V0.5" fill="none" stroke="#e4e4e4" stroke-width="1"/><path d="M3.2 5.4 L5.2 8.4 L9.6 3.2" fill="none" stroke="#000" stroke-width="2.2"/></svg></div></div>
<div class="c " style="left:1230px;top:319px;width:77px;height:33px;"><div class="a" style="left:19.5px;top:8px;line-height:0"><svg width="8" height="12" viewBox="0 0 8 12"><path d="M1 6.5 V3 H5" fill="none" stroke="#777" stroke-width="1.3"/><path d="M4.5 0.5 L7.5 3 L4.5 5.5 Z" fill="#777"/><path d="M7 5 V8.5 H3" fill="none" stroke="#777" stroke-width="1.3"/><path d="M3.5 6 L0.5 8.5 L3.5 11 Z" fill="#777"/></svg></div><div class="a" style="left:39.6px;top:10px;line-height:0"><svg width="18" height="9" viewBox="0 0 18 9"><g fill="#0a0f1e"><rect x="0" y="2.5" width="5" height="3.4"/><rect x="5.8" y="2.5" width="2.4" height="3.4"/><rect x="9" y="2.5" width="2.4" height="3.4"/><path d="M11.8 0 L17.5 4.2 L11.8 8.4 Z"/></g></svg></div></div>
<div class="c id" style="left:221px;top:353px;width:35px;height:33px;"><div class="a" style="left:0;width:34px;text-align:center;top:9.12px;line-height:14px;letter-spacing:0.78px;text-indent:0.78px">45</div></div>
<div class="c " style="left:257px;top:353px;width:156px;height:33px;"><div class="a" style="left:4px;top:9.12px;line-height:14px;letter-spacing:0.34px">Any</div></div>
<div class="c " style="left:414px;top:353px;width:187px;height:33px;"><div class="a" style="left:4px;top:9.12px;line-height:14px;letter-spacing:0.78px">VIP(ethernet0/3)</div></div>
<div class="c " style="left:602px;top:353px;width:118px;height:33px;"><div class="a" style="left:4.5px;top:9.12px;line-height:14px;letter-spacing:-0.02px">HTTP</div></div>
<div class="c " style="left:721px;top:353px;width:67px;height:33px;"><div class="a" style="left:24px;top:6px;line-height:0"><svg width="19" height="19" viewBox="0 0 19 19"><defs><radialGradient id="gg" cx="42%" cy="38%" r="62%"><stop offset="0" stop-color="#a6ff9a"/><stop offset=".55" stop-color="#4ee44a"/><stop offset="1" stop-color="#1fae26"/></radialGradient></defs><circle cx="9.4" cy="9.4" r="8.7" fill="url(#gg)" stroke="#063a10" stroke-width="1.2"/><path d="M4.6 11 L8.2 14 L13.8 4.8" fill="none" stroke="#000" stroke-width="1.9"/></svg></div></div>
<div class="c " style="left:789px;top:353px;width:187px;height:33px;"><div class="a" style="left:4px;top:3.3px;line-height:0"><svg width="25" height="25" viewBox="0 0 25 25"><rect x="0.5" y="0.5" width="21" height="23" fill="#96f4f4" stroke="#1b8088" stroke-width="1.1"/><rect x="3.2" y="3" width="15.3" height="17.4" fill="#1b8088"/><g fill="#e6ffff"><rect x="4.1" y="3.9" width="3.9" height="2.4"/><rect x="4.1" y="7.2" width="3.9" height="2.4"/><rect x="4.1" y="10.5" width="3.9" height="2.4"/><rect x="4.1" y="13.8" width="3.9" height="2.4"/><rect x="4.1" y="17.1" width="3.9" height="2.4"/><rect x="8.9" y="3.9" width="3.9" height="2.4"/><rect x="8.9" y="7.2" width="3.9" height="2.4"/><rect x="8.9" y="10.5" width="3.9" height="2.4"/><rect x="8.9" y="13.8" width="3.9" height="2.4"/><rect x="8.9" y="17.1" width="3.9" height="2.4"/><rect x="13.7" y="3.9" width="3.9" height="2.4"/><rect x="13.7" y="7.2" width="3.9" height="2.4"/><rect x="13.7" y="10.5" width="3.9" height="2.4"/><rect x="13.7" y="13.8" width="3.9" height="2.4"/><rect x="13.7" y="17.1" width="3.9" height="2.4"/></g><circle cx="10.8" cy="6.6" r="2.9" fill="#c8ffff" stroke="#1b8088" stroke-width="1.1"/><path d="M10 5.6 Q11.8 4.6 11.6 6.3 Q10 7 11.5 8" fill="none" stroke="#1b8088" stroke-width="0.8"/><path d="M12.3 9.2 L22.3 22.3" stroke="#1b8088" stroke-width="3.4"/><path d="M21 20.6 L23.6 24" stroke="#0f5c62" stroke-width="2"/></svg></div></div>
<div class="c " style="left:977px;top:353px;width:42px;height:33px;"><div class="a lk" style="left:4px;top:9.12px;line-height:14px;letter-spacing:-0.12px">Edit</div></div>
<div class="c " style="left:1020px;top:353px;width:59px;height:33px;"><div class="a lk" style="left:4px;top:9.12px;line-height:14px;letter-spacing:0.65px">Clone</div></div>
<div class="c " style="left:1080px;top:353px;width:80px;height:33px;"><div class="a lk" style="left:4px;top:9.12px;line-height:14px;letter-spacing:0.81px">Remove</div></div>
<div class="c " style="left:1161px;top:353px;width:68px;height:33px;"><div class="a" style="left:27px;top:9px;line-height:0"><svg width="12" height="12" viewBox="0 0 12 12"><rect x="0" y="0" width="12" height="12" fill="#fff"/><path d="M0.5 12 V0.5 H12" fill="none" stroke="#7a7a7a" stroke-width="1"/><path d="M1.5 11 V1.5 H11" fill="none" stroke="#383838" stroke-width="1"/><path d="M0.5 11.5 H11.5 V0.5" fill="none" stroke="#e4e4e4" stroke-width="1"/><path d="M3.2 5.4 L5.2 8.4 L9.6 3.2" fill="none" stroke="#000" stroke-width="2.2"/></svg></div></div>
<div class="c " style="left:1230px;top:353px;width:77px;height:33px;"><div class="a" style="left:19.5px;top:8px;line-height:0"><svg width="8" height="12" viewBox="0 0 8 12"><path d="M1 6.5 V3 H5" fill="none" stroke="#777" stroke-width="1.3"/><path d="M4.5 0.5 L7.5 3 L4.5 5.5 Z" fill="#777"/><path d="M7 5 V8.5 H3" fill="none" stroke="#777" stroke-width="1.3"/><path d="M3.5 6 L0.5 8.5 L3.5 11 Z" fill="#777"/></svg></div><div class="a" style="left:39.6px;top:10px;line-height:0"><svg width="18" height="9" viewBox="0 0 18 9"><g fill="#0a0f1e"><rect x="0" y="2.5" width="5" height="3.4"/><rect x="5.8" y="2.5" width="2.4" height="3.4"/><rect x="9" y="2.5" width="2.4" height="3.4"/><path d="M11.8 0 L17.5 4.2 L11.8 8.4 Z"/></g></svg></div></div>
<div class="c id" style="left:221px;top:387px;width:35px;height:33px;"><div class="a" style="left:0;width:34px;text-align:center;top:9.12px;line-height:14px;letter-spacing:0.78px;text-indent:0.78px">44</div></div>
<div class="c " style="left:257px;top:387px;width:156px;height:33px;"><div class="a g" style="left:4px;top:9.12px;line-height:14px;letter-spacing:0.34px">Any</div></div>
<div class="c " style="left:414px;top:387px;width:187px;height:33px;"><div class="a g" style="left:4px;top:9.12px;line-height:14px;letter-spacing:0.78px">VIP(ethernet0/3)</div></div>
<div class="c " style="left:602px;top:387px;width:118px;height:33px;"><div class="a g" style="left:4.5px;top:9.12px;line-height:14px;letter-spacing:-0.04px">APPLE-ICHAT</div></div>
<div class="c " style="left:721px;top:387px;width:67px;height:33px;"><div class="a" style="left:24px;top:6px;line-height:0"><svg width="19" height="19" viewBox="0 0 19 19"><defs><radialGradient id="gg" cx="42%" cy="38%" r="62%"><stop offset="0" stop-color="#a6ff9a"/><stop offset=".55" stop-color="#4ee44a"/><stop offset="1" stop-color="#1fae26"/></radialGradient></defs><circle cx="9.4" cy="9.4" r="8.7" fill="url(#gg)" stroke="#063a10" stroke-width="1.2"/><path d="M4.6 11 L8.2 14 L13.8 4.8" fill="none" stroke="#000" stroke-width="1.9"/></svg></div></div>
<div class="c " style="left:789px;top:387px;width:187px;height:33px;"><div class="a" style="left:4px;top:3.3px;line-height:0"><svg width="25" height="25" viewBox="0 0 25 25"><rect x="0.5" y="0.5" width="21" height="23" fill="#96f4f4" stroke="#1b8088" stroke-width="1.1"/><rect x="3.2" y="3" width="15.3" height="17.4" fill="#1b8088"/><g fill="#e6ffff"><rect x="4.1" y="3.9" width="3.9" height="2.4"/><rect x="4.1" y="7.2" width="3.9" height="2.4"/><rect x="4.1" y="10.5" width="3.9" height="2.4"/><rect x="4.1" y="13.8" width="3.9" height="2.4"/><rect x="4.1" y="17.1" width="3.9" height="2.4"/><rect x="8.9" y="3.9" width="3.9" height="2.4"/><rect x="8.9" y="7.2" width="3.9" height="2.4"/><rect x="8.9" y="10.5" width="3.9" height="2.4"/><rect x="8.9" y="13.8" width="3.9" height="2.4"/><rect x="8.9" y="17.1" width="3.9" height="2.4"/><rect x="13.7" y="3.9" width="3.9" height="2.4"/><rect x="13.7" y="7.2" width="3.9" height="2.4"/><rect x="13.7" y="10.5" width="3.9" height="2.4"/><rect x="13.7" y="13.8" width="3.9" height="2.4"/><rect x="13.7" y="17.1" width="3.9" height="2.4"/></g><circle cx="10.8" cy="6.6" r="2.9" fill="#c8ffff" stroke="#1b8088" stroke-width="1.1"/><path d="M10 5.6 Q11.8 4.6 11.6 6.3 Q10 7 11.5 8" fill="none" stroke="#1b8088" stroke-width="0.8"/><path d="M12.3 9.2 L22.3 22.3" stroke="#1b8088" stroke-width="3.4"/><path d="M21 20.6 L23.6 24" stroke="#0f5c62" stroke-width="2"/></svg></div></div>
<div class="c " style="left:977px;top:387px;width:42px;height:33px;"><div class="a lk" style="left:4px;top:9.12px;line-height:14px;letter-spacing:-0.12px">Edit</div></div>
<div class="c " style="left:1020px;top:387px;width:59px;height:33px;"><div class="a lk" style="left:4px;top:9.12px;line-height:14px;letter-spacing:0.65px">Clone</div></div>
<div class="c " style="left:1080px;top:387px;width:80px;height:33px;"><div class="a lk" style="left:4px;top:9.12px;line-height:14px;letter-spacing:0.81px">Remove</div></div>
<div class="c " style="left:1161px;top:387px;width:68px;height:33px;"><div class="a" style="left:27px;top:9px;line-height:0"><svg width="12" height="12" viewBox="0 0 12 12"><rect x="0" y="0" width="12" height="12" fill="#fff"/><path d="M0.5 12 V0.5 H12" fill="none" stroke="#7a7a7a" stroke-width="1"/><path d="M1.5 11 V1.5 H11" fill="none" stroke="#383838" stroke-width="1"/><path d="M0.5 11.5 H11.5 V0.5" fill="none" stroke="#e4e4e4" stroke-width="1"/></svg></div></div>
<div class="c " style="left:1230px;top:387px;width:77px;height:33px;"><div class="a" style="left:19.5px;top:8px;line-height:0"><svg width="8" height="12" viewBox="0 0 8 12"><path d="M1 6.5 V3 H5" fill="none" stroke="#777" stroke-width="1.3"/><path d="M4.5 0.5 L7.5 3 L4.5 5.5 Z" fill="#777"/><path d="M7 5 V8.5 H3" fill="none" stroke="#777" stroke-width="1.3"/><path d="M3.5 6 L0.5 8.5 L3.5 11 Z" fill="#777"/></svg></div><div class="a" style="left:39.6px;top:10px;line-height:0"><svg width="18" height="9" viewBox="0 0 18 9"><g fill="#0a0f1e"><rect x="0" y="2.5" width="5" height="3.4"/><rect x="5.8" y="2.5" width="2.4" height="3.4"/><rect x="9" y="2.5" width="2.4" height="3.4"/><path d="M11.8 0 L17.5 4.2 L11.8 8.4 Z"/></g></svg></div></div>
<div class="c id" style="left:221px;top:421px;width:35px;height:33px;"><div class="a" style="left:0;width:34px;text-align:center;top:9.12px;line-height:14px;letter-spacing:0.78px;text-indent:0.78px">38</div></div>
<div class="c " style="left:257px;top:421px;width:156px;height:33px;"><div class="a" style="left:4px;top:9.12px;line-height:14px;letter-spacing:0.11px">EDS</div></div>
<div class="c " style="left:414px;top:421px;width:187px;height:33px;"><div class="a" style="left:4px;top:9.12px;line-height:14px;letter-spacing:0.02px">Local_Net</div></div>
<div class="c " style="left:602px;top:421px;width:118px;height:33px;"><div class="a" style="left:4.5px;top:9.12px;line-height:14px;letter-spacing:0.11px">ANY</div></div>
<div class="c " style="left:721px;top:421px;width:67px;height:33px;"><div class="a" style="left:24px;top:6px;line-height:0"><svg width="19" height="19" viewBox="0 0 19 19"><defs><radialGradient id="gg" cx="42%" cy="38%" r="62%"><stop offset="0" stop-color="#a6ff9a"/><stop offset=".55" stop-color="#4ee44a"/><stop offset="1" stop-color="#1fae26"/></radialGradient></defs><circle cx="9.4" cy="9.4" r="8.7" fill="url(#gg)" stroke="#063a10" stroke-width="1.2"/><path d="M4.6 11 L8.2 14 L13.8 4.8" fill="none" stroke="#000" stroke-width="1.9"/></svg></div></div>
<div class="c " style="left:789px;top:421px;width:187px;height:33px;"><div class="a" style="left:4px;top:3.3px;line-height:0"><svg width="25" height="25" viewBox="0 0 25 25"><rect x="0.5" y="0.5" width="21" height="23" fill="#96f4f4" stroke="#1b8088" stroke-width="1.1"/><rect x="3.2" y="3" width="15.3" height="17.4" fill="#1b8088"/><g fill="#e6ffff"><rect x="4.1" y="3.9" width="3.9" height="2.4"/><rect x="4.1" y="7.2" width="3.9" height="2.4"/><rect x="4.1" y="10.5" width="3.9" height="2.4"/><rect x="4.1" y="13.8" width="3.9" height="2.4"/><rect x="4.1" y="17.1" width="3.9" height="2.4"/><rect x="8.9" y="3.9" width="3.9" height="2.4"/><rect x="8.9" y="7.2" width="3.9" height="2.4"/><rect x="8.9" y="10.5" width="3.9" height="2.4"/><rect x="8.9" y="13.8" width="3.9" height="2.4"/><rect x="8.9" y="17.1" width="3.9" height="2.4"/><rect x="13.7" y="3.9" width="3.9" height="2.4"/><rect x="13.7" y="7.2" width="3.9" height="2.4"/><rect x="13.7" y="10.5" width="3.9" height="2.4"/><rect x="13.7" y="13.8" width="3.9" height="2.4"/><rect x="13.7" y="17.1" width="3.9" height="2.4"/></g><circle cx="10.8" cy="6.6" r="2.9" fill="#c8ffff" stroke="#1b8088" stroke-width="1.1"/><path d="M10 5.6 Q11.8 4.6 11.6 6.3 Q10 7 11.5 8" fill="none" stroke="#1b8088" stroke-width="0.8"/><path d="M12.3 9.2 L22.3 22.3" stroke="#1b8088" stroke-width="3.4"/><path d="M21 20.6 L23.6 24" stroke="#0f5c62" stroke-width="2"/></svg></div></div>
<div class="c " style="left:977px;top:421px;width:42px;height:33px;"><div class="a lk" style="left:4px;top:9.12px;line-height:14px;letter-spacing:-0.12px">Edit</div></div>
<div class="c " style="left:1020px;top:421px;width:59px;height:33px;"><div class="a lk" style="left:4px;top:9.12px;line-height:14px;letter-spacing:0.65px">Clone</div></div>
<div class="c " style="left:1080px;top:421px;width:80px;height:33px;"><div class="a lk" style="left:4px;top:9.12px;line-height:14px;letter-spacing:0.81px">Remove</div></div>
<div class="c " style="left:1161px;top:421px;width:68px;height:33px;"><div class="a" style="left:27px;top:9px;line-height:0"><svg width="12" height="12" viewBox="0 0 12 12"><rect x="0" y="0" width="12" height="12" fill="#fff"/><path d="M0.5 12 V0.5 H12" fill="none" stroke="#7a7a7a" stroke-width="1"/><path d="M1.5 11 V1.5 H11" fill="none" stroke="#383838" stroke-width="1"/><path d="M0.5 11.5 H11.5 V0.5" fill="none" stroke="#e4e4e4" stroke-width="1"/><path d="M3.2 5.4 L5.2 8.4 L9.6 3.2" fill="none" stroke="#000" stroke-width="2.2"/></svg></div></div>
<div class="c " style="left:1230px;top:421px;width:77px;height:33px;"><div class="a" style="left:19.5px;top:8px;line-height:0"><svg width="8" height="12" viewBox="0 0 8 12"><path d="M1 6.5 V3 H5" fill="none" stroke="#777" stroke-width="1.3"/><path d="M4.5 0.5 L7.5 3 L4.5 5.5 Z" fill="#777"/><path d="M7 5 V8.5 H3" fill="none" stroke="#777" stroke-width="1.3"/><path d="M3.5 6 L0.5 8.5 L3.5 11 Z" fill="#777"/></svg></div><div class="a" style="left:39.6px;top:10px;line-height:0"><svg width="18" height="9" viewBox="0 0 18 9"><g fill="#0a0f1e"><rect x="0" y="2.5" width="5" height="3.4"/><rect x="5.8" y="2.5" width="2.4" height="3.4"/><rect x="9" y="2.5" width="2.4" height="3.4"/><path d="M11.8 0 L17.5 4.2 L11.8 8.4 Z"/></g></svg></div></div>
<div class="c id" style="left:221px;top:455px;width:35px;height:57px;"><div class="a" style="left:0;width:34px;text-align:center;top:21.12px;line-height:14px;letter-spacing:0.78px;text-indent:0.78px">25</div></div>
<div class="c " style="left:257px;top:455px;width:156px;height:57px;"><div class="a" style="left:4px;top:21.12px;line-height:14px;letter-spacing:0.07px">Vitel_ADSL</div></div>
<div class="c " style="left:414px;top:455px;width:187px;height:57px;"></div>
<div class="c " style="left:602px;top:455px;width:118px;height:57px;"><div class="a" style="left:4.5px;top:3.12px;line-height:14px;letter-spacing:-0.02px">HTTP</div><div class="a" style="left:4.5px;top:15.12px;line-height:14px;letter-spacing:0.11px">HTTPS</div><div class="a" style="left:4.5px;top:27.12px;line-height:14px;letter-spacing:0.11px">SSH</div><div class="a" style="left:4.5px;top:39.12px;line-height:14px;letter-spacing:0.34px">Webmin</div></div>
<div class="c " style="left:721px;top:455px;width:67px;height:57px;"><div class="a" style="left:24px;top:18px;line-height:0"><svg width="19" height="19" viewBox="0 0 19 19"><defs><radialGradient id="gg" cx="42%" cy="38%" r="62%"><stop offset="0" stop-color="#a6ff9a"/><stop offset=".55" stop-color="#4ee44a"/><stop offset="1" stop-color="#1fae26"/></radialGradient></defs><circle cx="9.4" cy="9.4" r="8.7" fill="url(#gg)" stroke="#063a10" stroke-width="1.2"/><path d="M4.6 11 L8.2 14 L13.8 4.8" fill="none" stroke="#000" stroke-width="1.9"/></svg></div></div>
<div class="c " style="left:789px;top:455px;width:187px;height:57px;"></div>
<div class="c " style="left:977px;top:455px;width:42px;height:57px;"><div class="a lk" style="left:4px;top:21.12px;line-height:14px;letter-spacing:-0.12px">Edit</div></div>
<div class="c " style="left:1020px;top:455px;width:59px;height:57px;"><div class="a lk" style="left:4px;top:21.12px;line-height:14px;letter-spacing:0.65px">Clone</div></div>
<div class="c " style="left:1080px;top:455px;width:80px;height:57px;"><div class="a lk" style="left:4px;top:21.12px;line-height:14px;letter-spacing:0.81px">Remove</div></div>
<div class="c " style="left:1161px;top:455px;width:68px;height:57px;"><div class="a" style="left:27px;top:21px;line-height:0"><svg width="12" height="12" viewBox="0 0 12 12"><rect x="0" y="0" width="12" height="12" fill="#fff"/><path d="M0.5 12 V0.5 H12" fill="none" stroke="#7a7a7a" stroke-width="1"/><path d="M1.5 11 V1.5 H11" fill="none" stroke="#383838" stroke-width="1"/><path d="M0.5 11.5 H11.5 V0.5" fill="none" stroke="#e4e4e4" stroke-width="1"/><path d="M3.2 5.4 L5.2 8.4 L9.6 3.2" fill="none" stroke="#000" stroke-width="2.2"/></svg></div></div>
<div class="c " style="left:1230px;top:455px;width:77px;height:57px;"><div class="a" style="left:19.5px;top:20px;line-height:0"><svg width="8" height="12" viewBox="0 0 8 12"><path d="M1 6.5 V3 H5" fill="none" stroke="#777" stroke-width="1.3"/><path d="M4.5 0.5 L7.5 3 L4.5 5.5 Z" fill="#777"/><path d="M7 5 V8.5 H3" fill="none" stroke="#777" stroke-width="1.3"/><path d="M3.5 6 L0.5 8.5 L3.5 11 Z" fill="#777"/></svg></div><div class="a" style="left:39.6px;top:22px;line-height:0"><svg width="18" height="9" viewBox="0 0 18 9"><g fill="#0a0f1e"><rect x="0" y="2.5" width="5" height="3.4"/><rect x="5.8" y="2.5" width="2.4" height="3.4"/><rect x="9" y="2.5" width="2.4" height="3.4"/><path d="M11.8 0 L17.5 4.2 L11.8 8.4 Z"/></g></svg></div></div>
<div class="c id" style="left:221px;top:513px;width:35px;height:33px;"><div class="a" style="left:0;width:34px;text-align:center;top:9.12px;line-height:14px;letter-spacing:0.78px;text-indent:0.78px">65</div></div>
<div class="c " style="left:257px;top:513px;width:156px;height:33px;"><div class="a" style="left:4px;top:9.12px;line-height:14px;letter-spacing:0.34px">Any</div></div>
<div class="c " style="left:414px;top:513px;width:187px;height:33px;"><div class="a" style="left:4px;top:9.12px;line-height:14px;letter-spacing:0.78px">VIP(ethernet0/3)</div></div>
<div class="c " style="left:602px;top:513px;width:118px;height:33px;"><div class="a" style="left:4.5px;top:9.12px;line-height:14px;letter-spacing:0.39px">TCP8089</div></div>
<div class="c " style="left:721px;top:513px;width:67px;height:33px;"><div class="a" style="left:24px;top:6px;line-height:0"><svg width="19" height="19" viewBox="0 0 19 19"><defs><radialGradient id="gg" cx="42%" cy="38%" r="62%"><stop offset="0" stop-color="#a6ff9a"/><stop offset=".55" stop-color="#4ee44a"/><stop offset="1" stop-color="#1fae26"/></radialGradient></defs><circle cx="9.4" cy="9.4" r="8.7" fill="url(#gg)" stroke="#063a10" stroke-width="1.2"/><path d="M4.6 11 L8.2 14 L13.8 4.8" fill="none" stroke="#000" stroke-width="1.9"/></svg></div></div>
<div class="c " style="left:789px;top:513px;width:187px;height:33px;"><div class="a" style="left:4px;top:3.3px;line-height:0"><svg width="25" height="25" viewBox="0 0 25 25"><rect x="0.5" y="0.5" width="21" height="23" fill="#96f4f4" stroke="#1b8088" stroke-width="1.1"/><rect x="3.2" y="3" width="15.3" height="17.4" fill="#1b8088"/><g fill="#e6ffff"><rect x="4.1" y="3.9" width="3.9" height="2.4"/><rect x="4.1" y="7.2" width="3.9" height="2.4"/><rect x="4.1" y="10.5" width="3.9" height="2.4"/><rect x="4.1" y="13.8" width="3.9" height="2.4"/><rect x="4.1" y="17.1" width="3.9" height="2.4"/><rect x="8.9" y="3.9" width="3.9" height="2.4"/><rect x="8.9" y="7.2" width="3.9" height="2.4"/><rect x="8.9" y="10.5" width="3.9" height="2.4"/><rect x="8.9" y="13.8" width="3.9" height="2.4"/><rect x="8.9" y="17.1" width="3.9" height="2.4"/><rect x="13.7" y="3.9" width="3.9" height="2.4"/><rect x="13.7" y="7.2" width="3.9" height="2.4"/><rect x="13.7" y="10.5" width="3.9" height="2.4"/><rect x="13.7" y="13.8" width="3.9" height="2.4"/><rect x="13.7" y="17.1" width="3.9" height="2.4"/></g><circle cx="10.8" cy="6.6" r="2.9" fill="#c8ffff" stroke="#1b8088" stroke-width="1.1"/><path d="M10 5.6 Q11.8 4.6 11.6 6.3 Q10 7 11.5 8" fill="none" stroke="#1b8088" stroke-width="0.8"/><path d="M12.3 9.2 L22.3 22.3" stroke="#1b8088" stroke-width="3.4"/><path d="M21 20.6 L23.6 24" stroke="#0f5c62" stroke-width="2"/></svg></div></div>
<div class="c " style="left:977px;top:513px;width:42px;height:33px;"><div class="a lk" style="left:4px;top:9.12px;line-height:14px;letter-spacing:-0.12px">Edit</div></div>
<div class="c " style="left:1020px;top:513px;width:59px;height:33px;"><div class="a lk" style="left:4px;top:9.12px;line-height:14px;letter-spacing:0.65px">Clone</div></div>
<div class="c " style="left:1080px;top:513px;width:80px;height:33px;"><div class="a lk" style="left:4px;top:9.12px;line-height:14px;letter-spacing:0.81px">Remove</div></div>
<div class="c " style="left:1161px;top:513px;width:68px;height:33px;"><div class="a" style="left:27px;top:9px;line-height:0"><svg width="12" height="12" viewBox="0 0 12 12"><rect x="0" y="0" width="12" height="12" fill="#fff"/><path d="M0.5 12 V0.5 H12" fill="none" stroke="#7a7a7a" stroke-width="1"/><path d="M1.5 11 V1.5 H11" fill="none" stroke="#383838" stroke-width="1"/><path d="M0.5 11.5 H11.5 V0.5" fill="none" stroke="#e4e4e4" stroke-width="1"/><path d="M3.2 5.4 L5.2 8.4 L9.6 3.2" fill="none" stroke="#000" stroke-width="2.2"/></svg></div></div>
<div class="c " style="left:1230px;top:513px;width:77px;height:33px;"><div class="a" style="left:19.5px;top:8px;line-height:0"><svg width="8" height="12" viewBox="0 0 8 12"><path d="M1 6.5 V3 H5" fill="none" stroke="#777" stroke-width="1.3"/><path d="M4.5 0.5 L7.5 3 L4.5 5.5 Z" fill="#777"/><path d="M7 5 V8.5 H3" fill="none" stroke="#777" stroke-width="1.3"/><path d="M3.5 6 L0.5 8.5 L3.5 11 Z" fill="#777"/></svg></div><div class="a" style="left:39.6px;top:10px;line-height:0"><svg width="18" height="9" viewBox="0 0 18 9"><g fill="#0a0f1e"><rect x="0" y="2.5" width="5" height="3.4"/><rect x="5.8" y="2.5" width="2.4" height="3.4"/><rect x="9" y="2.5" width="2.4" height="3.4"/><path d="M11.8 0 L17.5 4.2 L11.8 8.4 Z"/></g></svg></div></div>
<div class="c id" style="left:221px;top:547px;width:35px;height:33px;"><div class="a" style="left:0;width:34px;text-align:center;top:9.12px;line-height:14px;letter-spacing:0.78px;text-indent:0.78px">9</div></div>
<div class="c " style="left:257px;top:547px;width:156px;height:33px;"><div class="a" style="left:4px;top:9.12px;line-height:14px;letter-spacing:0.34px">Any</div></div>
<div class="c " style="left:414px;top:547px;width:187px;height:33px;"><div class="a" style="left:4px;top:9.12px;line-height:14px;letter-spacing:0.34px">Any</div></div>
<div class="c " style="left:602px;top:547px;width:118px;height:33px;"><div class="a" style="left:4.5px;top:9.12px;line-height:14px;letter-spacing:0.11px">ANY</div></div>
<div class="c " style="left:721px;top:547px;width:67px;height:33px;"><div class="a" style="left:24px;top:6px;line-height:0"><svg width="19" height="19" viewBox="0 0 19 19"><defs><radialGradient id="rg" cx="35%" cy="35%" r="65%"><stop offset="0" stop-color="#ff8a5a"/><stop offset=".55" stop-color="#e8202a"/><stop offset="1" stop-color="#b0101a"/></radialGradient></defs><circle cx="9.5" cy="9.5" r="8.8" fill="url(#rg)" stroke="#300" stroke-width="1.2"/><path d="M6 6 L13 13 M13 6 L6 13" stroke="#ffe6f0" stroke-width="2.4"/></svg></div></div>
<div class="c " style="left:789px;top:547px;width:187px;height:33px;"><div class="a" style="left:4px;top:3.3px;line-height:0"><svg width="25" height="25" viewBox="0 0 25 25"><rect x="0.5" y="0.5" width="21" height="23" fill="#96f4f4" stroke="#1b8088" stroke-width="1.1"/><rect x="3.2" y="3" width="15.3" height="17.4" fill="#1b8088"/><g fill="#e6ffff"><rect x="4.1" y="3.9" width="3.9" height="2.4"/><rect x="4.1" y="7.2" width="3.9" height="2.4"/><rect x="4.1" y="10.5" width="3.9" height="2.4"/><rect x="4.1" y="13.8" width="3.9" height="2.4"/><rect x="4.1" y="17.1" width="3.9" height="2.4"/><rect x="8.9" y="3.9" width="3.9" height="2.4"/><rect x="8.9" y="7.2" width="3.9" height="2.4"/><rect x="8.9" y="10.5" width="3.9" height="2.4"/><rect x="8.9" y="13.8" width="3.9" height="2.4"/><rect x="8.9" y="17.1" width="3.9" height="2.4"/><rect x="13.7" y="3.9" width="3.9" height="2.4"/><rect x="13.7" y="7.2" width="3.9" height="2.4"/><rect x="13.7" y="10.5" width="3.9" height="2.4"/><rect x="13.7" y="13.8" width="3.9" height="2.4"/><rect x="13.7" y="17.1" width="3.9" height="2.4"/></g><circle cx="10.8" cy="6.6" r="2.9" fill="#c8ffff" stroke="#1b8088" stroke-width="1.1"/><path d="M10 5.6 Q11.8 4.6 11.6 6.3 Q10 7 11.5 8" fill="none" stroke="#1b8088" stroke-width="0.8"/><path d="M12.3 9.2 L22.3 22.3" stroke="#1b8088" stroke-width="3.4"/><path d="M21 20.6 L23.6 24" stroke="#0f5c62" stroke-width="2"/></svg></div></div>
<div class="c " style="left:977px;top:547px;width:42px;height:33px;"><div class="a lk" style="left:4px;top:9.12px;line-height:14px;letter-spacing:-0.12px">Edit</div></div>
<div class="c " style="left:1020px;top:547px;width:59px;height:33px;"><div class="a lk" style="left:4px;top:9.12px;line-height:14px;letter-spacing:0.65px">Clone</div></div>
<div class="c " style="left:1080px;top:547px;width:80px;height:33px;"><div class="a lk" style="left:4px;top:9.12px;line-height:14px;letter-spacing:0.81px">Remove</div></div>
<div class="c " style="left:1161px;top:547px;width:68px;height:33px;"><div class="a" style="left:27px;top:9px;line-height:0"><svg width="12" height="12" viewBox="0 0 12 12"><rect x="0" y="0" width="12" height="12" fill="#fff"/><path d="M0.5 12 V0.5 H12" fill="none" stroke="#7a7a7a" stroke-width="1"/><path d="M1.5 11 V1.5 H11" fill="none" stroke="#383838" stroke-width="1"/><path d="M0.5 11.5 H11.5 V0.5" fill="none" stroke="#e4e4e4" stroke-width="1"/><path d="M3.2 5.4 L5.2 8.4 L9.6 3.2" fill="none" stroke="#000" stroke-width="2.2"/></svg></div></div>
<div class="c " style="left:1230px;top:547px;width:77px;height:33px;"><div class="a" style="left:19.5px;top:8px;line-height:0"><svg width="8" height="12" viewBox="0 0 8 12"><path d="M1 6.5 V3 H5" fill="none" stroke="#777" stroke-width="1.3"/><path d="M4.5 0.5 L7.5 3 L4.5 5.5 Z" fill="#777"/><path d="M7 5 V8.5 H3" fill="none" stroke="#777" stroke-width="1.3"/><path d="M3.5 6 L0.5 8.5 L3.5 11 Z" fill="#777"/></svg></div><div class="a" style="left:39.6px;top:10px;line-height:0"><svg width="18" height="9" viewBox="0 0 18 9"><g fill="#0a0f1e"><rect x="0" y="2.5" width="5" height="3.4"/><rect x="5.8" y="2.5" width="2.4" height="3.4"/><rect x="9" y="2.5" width="2.4" height="3.4"/><path d="M11.8 0 L17.5 4.2 L11.8 8.4 Z"/></g></svg></div></div>
</body></html>
